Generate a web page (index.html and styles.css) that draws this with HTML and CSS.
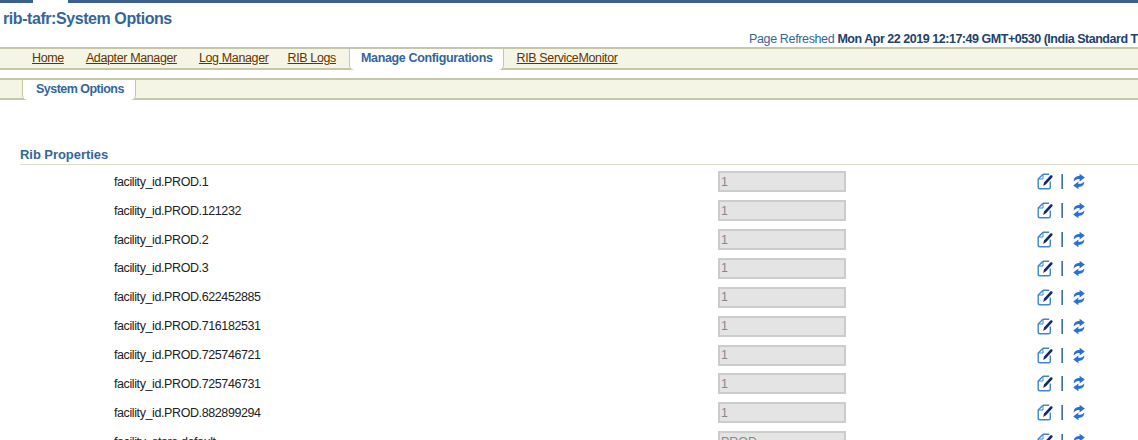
FILE: index.html
```html
<!DOCTYPE html>
<html lang="en">
<head>
<meta charset="utf-8">
<title>rib-tafr:System Options</title>
<link rel="stylesheet" href="styles.css">
</head>
<body>
<svg width="0" height="0" class="defs">
  <defs>
    <symbol id="edit" viewBox="0 0 17 17">
      <path d="M6 1.2H12.2M6 1.2L1.2 6V14C1.2 15 2 15.8 3 15.8H11.5C12.5 15.8 13.3 15 13.3 14V8.5" fill="none" stroke="#3f86cc" stroke-width="1.4"/>
      <path d="M1.5 6H6V1.5" fill="none" stroke="#3f86cc" stroke-width="1"/>
      <path d="M6.2 13L7 9.5L13.4 2.6C14 2 14.6 2 15.2 2.6C15.8 3.2 15.8 3.8 15.2 4.4L9 11.2Z" fill="#14286e"/>
    </symbol>
    <symbol id="sync" viewBox="0 0 12 16">
      <path d="M.8 8C.4 4.4 3.2 2.6 6.6 2.6V.2L11.8 4L6.6 8V5.6C4.4 5.6 2.4 6 .8 8Z" fill="#2a6fd6"/>
      <path d="M11.2 8C11.6 11.6 8.8 13.4 5.4 13.4V15.8L.2 12L5.4 8V10.4C7.6 10.4 9.6 10 11.2 8Z" fill="#2a6fd6"/>
    </symbol>
  </defs>
</svg>
<div class="topbar"><span class="bar-a"></span><span class="bar-b"></span></div>
<h1 class="title">rib-tafr:System Options</h1>
<div class="refreshed">Page Refreshed <b>Mon Apr 22 2019 12:17:49 GMT+0530 (India Standard Time)</b></div>
<nav class="tabs primary">
  <a class="tab" href="#">Home</a>
  <a class="tab" href="#">Adapter Manager</a>
  <a class="tab tight" href="#">Log Manager</a>
  <a class="tab" href="#">RIB Logs</a>
  <span class="tab active">Manage Configurations</span>
  <a class="tab" href="#">RIB ServiceMonitor</a>
</nav>
<nav class="tabs secondary">
  <span class="tab active">System Options</span>
</nav>
<h2 class="section">Rib Properties</h2>
<div class="rows">
  <div class="row"><span class="name">facility_id.PROD.1</span><input class="value" disabled value="1"><span class="actions"><svg class="edit"><use href="#edit"/></svg><i class="sep"></i><svg class="sync"><use href="#sync"/></svg></span></div>
  <div class="row"><span class="name">facility_id.PROD.121232</span><input class="value" disabled value="1"><span class="actions"><svg class="edit"><use href="#edit"/></svg><i class="sep"></i><svg class="sync"><use href="#sync"/></svg></span></div>
  <div class="row"><span class="name">facility_id.PROD.2</span><input class="value" disabled value="1"><span class="actions"><svg class="edit"><use href="#edit"/></svg><i class="sep"></i><svg class="sync"><use href="#sync"/></svg></span></div>
  <div class="row"><span class="name">facility_id.PROD.3</span><input class="value" disabled value="1"><span class="actions"><svg class="edit"><use href="#edit"/></svg><i class="sep"></i><svg class="sync"><use href="#sync"/></svg></span></div>
  <div class="row"><span class="name">facility_id.PROD.622452885</span><input class="value" disabled value="1"><span class="actions"><svg class="edit"><use href="#edit"/></svg><i class="sep"></i><svg class="sync"><use href="#sync"/></svg></span></div>
  <div class="row"><span class="name">facility_id.PROD.716182531</span><input class="value" disabled value="1"><span class="actions"><svg class="edit"><use href="#edit"/></svg><i class="sep"></i><svg class="sync"><use href="#sync"/></svg></span></div>
  <div class="row"><span class="name">facility_id.PROD.725746721</span><input class="value" disabled value="1"><span class="actions"><svg class="edit"><use href="#edit"/></svg><i class="sep"></i><svg class="sync"><use href="#sync"/></svg></span></div>
  <div class="row"><span class="name">facility_id.PROD.725746731</span><input class="value" disabled value="1"><span class="actions"><svg class="edit"><use href="#edit"/></svg><i class="sep"></i><svg class="sync"><use href="#sync"/></svg></span></div>
  <div class="row"><span class="name">facility_id.PROD.882899294</span><input class="value" disabled value="1"><span class="actions"><svg class="edit"><use href="#edit"/></svg><i class="sep"></i><svg class="sync"><use href="#sync"/></svg></span></div>
  <div class="row"><span class="name">facility_store.default</span><input class="value" disabled value="PROD"><span class="actions"><svg class="edit"><use href="#edit"/></svg><i class="sep"></i><svg class="sync"><use href="#sync"/></svg></span></div>
</div>
</body>
</html>
```
FILE: styles.css
```css
html, body {
  margin: 0;
  height: 440px;
  overflow: hidden;
  background: #fff;
  font-family: "Liberation Sans", Arial, sans-serif;
  font-size: 12.5px;
  color: #222;
}
.defs { position: absolute; }
.topbar { display: flex; height: 3px; }
.bar-a { width: 33px; background: #3d5f8c; }
.bar-b { flex: 1; margin-left: 35px; background: #3d5f8c; }
.title {
  margin: 8px 0 0 3px;
  font-size: 16px;
  line-height: 16px;
  font-weight: bold;
  color: #336699;
  white-space: nowrap;
  letter-spacing: -.43px;
}
.refreshed {
  margin: 5px 0 0 749px;
  height: 15px;
  line-height: 15px;
  width: 389px;
  overflow: hidden;
  white-space: nowrap;
  color: #336699;
  letter-spacing: -.36px;
}
.refreshed b { color: #21426b; letter-spacing: -.47px; }
.tabs {
  display: flex;
  background: #f5f5e6;
  border-top: 2px solid #c6c6a8;
  border-bottom: 2px solid #c6c6a8;
  white-space: nowrap;
  box-sizing: border-box;
}
.primary { height: 23px; padding-left: 32px; }
.primary .tab { margin-right: 22px; line-height: 19px; }
.primary .tab.tight { margin-right: 19px; }
.secondary { height: 22px; margin-top: 8px; padding-left: 22px; }
.tab { color: #663300; letter-spacing: -.37px; }
.tab.active {
  background: #fff;
  color: #336699;
  font-weight: bold;
  margin-bottom: -2px;
  border-right: 1px solid #c6c6a8;
  border-left: 1px solid #c6c6a8;
  border-bottom-left-radius: 5px;
  border-bottom-right-radius: 5px;
}
.primary .tab.active { margin-left: -9px; margin-right: 13px; padding: 0 10px 0 11px; letter-spacing: -.35px; }
.secondary .tab.active { padding: 0 11px 0 13px; line-height: 18px; letter-spacing: -.52px; }
.section {
  margin: 47px 0 0 20px;
  height: 17px;
  line-height: 15px;
  font-size: 13px;
  font-weight: bold;
  color: #336699;
  border-bottom: 1px solid #dcdccb;
  letter-spacing: -.05px;
}
.rows { margin-top: 2.4px; }
.row {
  display: flex;
  align-items: center;
  height: 28.875px;
  padding-left: 114px;
}
.name { width: 604px; letter-spacing: -.4px; }
.value {
  width: 128px;
  height: 21px;
  box-sizing: border-box;
  margin: 0;
  padding: 0 1px;
  border: 2px solid #ccc;
  background: #e4e4e4;
  color: #888;
  font: 12.5px "Liberation Sans", Arial, sans-serif;
}
.actions { display: flex; align-items: center; margin-left: 191px; }
.edit { width: 17px; height: 17px; }
.sep { width: 2px; height: 15px; margin: 0 10px 0 7px; background: linear-gradient(90deg, #c49a52 50%, #3f6f9f 50%); }
.sync { width: 12px; height: 17px; }
```
